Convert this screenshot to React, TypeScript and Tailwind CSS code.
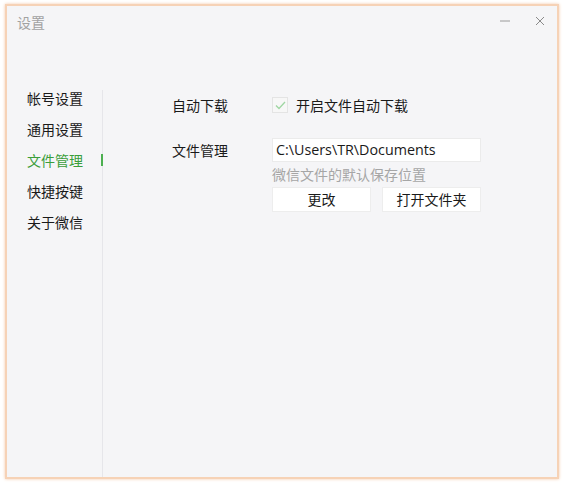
const navItems = ['帐号设置', '通用设置', '文件管理', '快捷按键', '关于微信']

const font = { fontFamily: '"Noto Sans CJK SC", "Liberation Sans", sans-serif' }

export default function App() {
  return (
    <div className="w-[564px] h-[484px] bg-white p-[4px_5px_5px_5px]" style={font}>
      <div className="w-full h-full flex flex-col bg-[#f5f5f7] border-2 border-[#f6d2b6] shadow-[0_0_3px_#f3c9a8]">
        {/* Title bar */}
        <div className="h-[42px] flex items-start justify-between pl-[10px] pr-[12px] pt-[6px]">
          <span className="text-[14px] text-[#a2a2a2] leading-5">设置</span>
          <div className="flex items-center gap-[25px] pt-[4px] text-[#9a9a9a]">
            <svg width="10" height="10" viewBox="0 0 10 10">
              <line x1="0" y1="5" x2="10" y2="5" stroke="#9a9a9a" strokeWidth="1" />
            </svg>
            <svg width="10" height="10" viewBox="0 0 10 10">
              <path d="M1 1L9 9M9 1L1 9" stroke="#8a8a8a" strokeWidth="1" />
            </svg>
          </div>
        </div>

        <div className="flex-1 flex min-h-0">
          {/* Sidebar */}
          <div className="w-[96px] border-r border-[#e6e6ea] mt-[42px] relative">
            <ul className="-mt-[7px]">
              {navItems.map((item) => (
                <li
                  key={item}
                  className={`h-[31px] pl-[20px] flex items-center text-[14px] ${
                    item === '文件管理' ? 'text-[#3a9e3a]' : 'text-[#1a1a1a]'
                  }`}
                >
                  {item}
                </li>
              ))}
            </ul>
            <div className="absolute right-[-1px] top-[64px] w-[2px] h-[12px] bg-[#4caf50]" />
          </div>

          {/* Content */}
          <div className="flex-1 pl-[69px] pt-[47px]">
            <div className="flex items-center h-[20px]">
              <span className="w-[100px] text-[14px] text-[#1a1a1a]">自动下载</span>
              <span className="w-[16px] h-[16px] border border-[#e4e4e4] bg-[#f7f7f7] flex items-center justify-center">
                <svg width="11" height="9" viewBox="0 0 11 9">
                  <path d="M1 4.5L4 7.5L10 1" fill="none" stroke="#9fd6a3" strokeWidth="1.3" />
                </svg>
              </span>
              <span className="ml-[8px] text-[14px] text-[#1a1a1a]">开启文件自动下载</span>
            </div>

            <div className="flex mt-[23px]">
              <span className="w-[100px] text-[14px] text-[#1a1a1a] leading-[24px]">文件管理</span>
              <div className="w-[209px]">
                <div className="h-[24px] bg-white border border-[#ebebeb] flex items-center pl-[3px] text-[14.3px] text-[#1a1a1a]" style={{ fontFamily: '"Open Sans", "Noto Sans CJK SC", sans-serif' }}>
                  C:\Users\TR\Documents
                </div>
                <p className="mt-[1px] text-[14px] leading-[22px] text-[#a6a6a6]">微信文件的默认保存位置</p>
                <div className="flex justify-between mt-[2px]">
                  <button className="w-[99px] h-[25px] bg-white border border-[#ededed] text-[14px] text-[#1a1a1a]">更改</button>
                  <button className="w-[99px] h-[25px] bg-white border border-[#ededed] text-[14px] text-[#1a1a1a]">打开文件夹</button>
                </div>
              </div>
            </div>
          </div>
        </div>
      </div>
    </div>
  )
}
